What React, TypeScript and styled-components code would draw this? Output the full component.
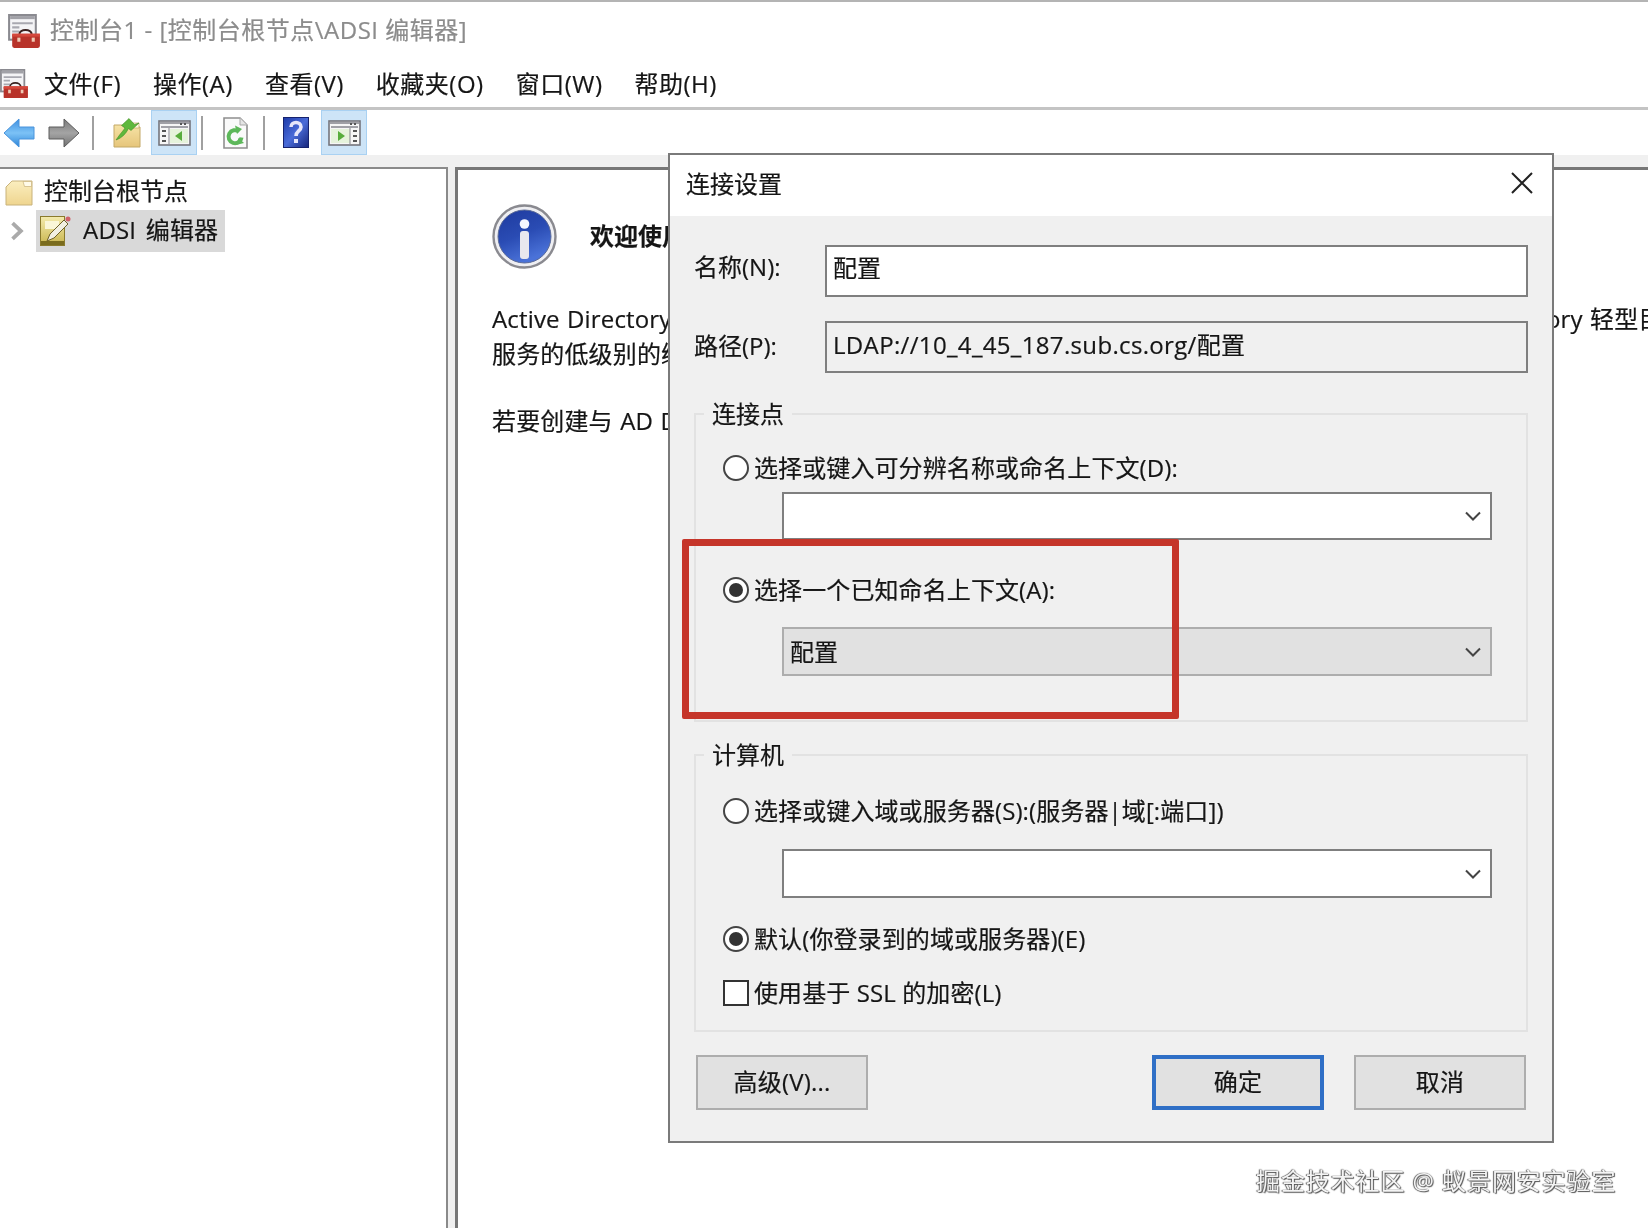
import React from 'react';
import styled, { createGlobalStyle } from 'styled-components';

const GlobalStyle = createGlobalStyle`
  html, body {
    margin: 0;
    padding: 0;
    background: #fff;
  }
  * { box-sizing: border-box; }
`;

const Page = styled.div`
  position: relative;
  width: 1648px;
  height: 1228px;
  overflow: hidden;
  display: flex;
  flex-direction: column;
  background: #fff;
  color: #151515;
  font-family: "Open Sans", "Noto Sans CJK SC", sans-serif;
  font-size: 24px;
  -webkit-text-stroke: 0.2px currentColor;
  filter: blur(0.45px);
`;

const TitleBar = styled.div`
  height: 60px;
  flex: none;
  display: flex;
  align-items: center;
  gap: 10px;
  padding: 0 0 0 8px;
  border-top: 2px solid #b4b4b4;
  color: #8c8c8c;
`;

const TitleText = styled.span`
  margin-bottom: 5px;
  letter-spacing: 0.5px;
`;

const MenuBar = styled.div`
  height: 50px;
  flex: none;
  display: flex;
  align-items: center;
  border-bottom: 3px solid #c4c4c4;
`;

const MenuLogo = styled.div`
  width: 44px;
  flex: none;
  display: flex;
`;

const MenuItem = styled.span`
  margin: 0 32px 2px 0;
  letter-spacing: 0.5px;
  white-space: nowrap;
`;

const ToolBar = styled.div`
  height: 45px;
  flex: none;
  display: flex;
  align-items: center;
`;

const ToolButton = styled.div<{ $w: number; $active?: boolean; $ml?: number }>`
  width: ${p => p.$w}px;
  height: 45px;
  margin-left: ${p => p.$ml ?? 0}px;
  flex: none;
  display: flex;
  align-items: center;
  justify-content: center;
  background: ${p => (p.$active ? '#cde4f7' : 'transparent')};
  border: ${p => (p.$active ? '1px solid #a9d1f2' : 'none')};
`;

const ToolSep = styled.div<{ $ml: number }>`
  width: 2px;
  height: 34px;
  margin-left: ${p => p.$ml}px;
  flex: none;
  background: #a0a0a0;
`;

const Workspace = styled.div`
  flex: 1;
  display: flex;
  gap: 7px;
  padding-top: 12px;
  background: #f0f0f0;
`;

const TreePane = styled.div`
  width: 448px;
  flex: none;
  background: #fff;
  border-top: 2px solid #8a8a8a;
  border-right: 2px solid #8a8a8a;
  padding-top: 6px;
`;

const TreeRow = styled.div<{ $pl: number; $mt?: number }>`
  display: flex;
  align-items: center;
  height: 35px;
  margin-top: ${p => p.$mt ?? 0}px;
  padding-left: ${p => p.$pl}px;
`;

const TreeIcon = styled.div`
  width: 39px;
  flex: none;
  display: flex;
`;

const TreeText = styled.span`
  margin-bottom: 6px;
`;

const TreeSelected = styled.div`
  display: flex;
  align-items: center;
  height: 42px;
  padding: 0 7px 0 4px;
  margin-left: 9px;
  background: #d9d9d9;
`;

const TreeSelectedIcon = styled.div`
  width: 43px;
  flex: none;
  display: flex;
`;

const TreeSelectedText = styled.span`
  margin-bottom: 4px;
  letter-spacing: 0.2px;
  word-spacing: 3px;
`;

const ContentPane = styled.div`
  flex: 1;
  min-width: 0;
  background: #fff;
  border-top: 3px solid #777;
  border-left: 3px solid #777;
  padding: 34px 0 0 34px;
  overflow: hidden;
`;

const WelcomeRow = styled.div`
  display: flex;
  align-items: center;
  gap: 33px;
`;

const WelcomeTitle = styled.span`
  margin-bottom: 4px;
  font-weight: 700;
  white-space: nowrap;
`;

const Para = styled.p`
  margin: 32px 0 1px;
  line-height: 35px;
  letter-spacing: 0.15px;
  word-spacing: 1px;
  white-space: nowrap;
`;

const Dialog = styled.div`
  position: absolute;
  left: 668px;
  top: 153px;
  width: 886px;
  height: 990px;
  display: flex;
  flex-direction: column;
  background: #f0f0f0;
  border: 2px solid #7a7a7a;
`;

const DialogHead = styled.div`
  height: 61px;
  flex: none;
  display: flex;
  align-items: center;
  justify-content: space-between;
  padding: 0 19px 6px 16px;
  background: #fff;
`;

const DialogBody = styled.div`
  flex: 1;
  position: relative;
  padding: 29px 24px 0;
`;

const FieldRow = styled.div<{ $mt?: number }>`
  display: grid;
  grid-template-columns: 131px 1fr;
  align-items: center;
  margin-top: ${p => p.$mt ?? 0}px;
`;

const FieldLabel = styled.span<{ $lift: number }>`
  margin-bottom: ${p => p.$lift}px;
  white-space: nowrap;
`;

const TextField = styled.div<{ $readOnly?: boolean }>`
  height: 52px;
  display: flex;
  align-items: center;
  padding: 0 0 ${p => (p.$readOnly ? 8 : 9)}px 6px;
  letter-spacing: ${p => (p.$readOnly ? 0.34 : 0)}px;
  white-space: nowrap;
  background: ${p => (p.$readOnly ? '#f0f0f0' : '#fff')};
  border: 2px solid #7f7f7f;
`;

const Group = styled.div<{ $mt: number; $h: number; $pt: number }>`
  position: relative;
  height: ${p => p.$h}px;
  margin-top: ${p => p.$mt}px;
  padding: ${p => p.$pt}px 34px 0 27px;
  border: 2px solid #e2e2e2;
`;

const Legend = styled.span`
  position: absolute;
  left: 8px;
  top: -17px;
  padding: 0 8px;
  line-height: 32px;
  background: #f0f0f0;
`;

const OptionRow = styled.div<{ $mt?: number }>`
  display: flex;
  align-items: center;
  gap: 5px;
  height: 30px;
  margin-top: ${p => p.$mt ?? 0}px;
  white-space: nowrap;
`;

const OptionText = styled.span`
  margin-bottom: 4px;
  letter-spacing: 0.1px;
`;

const Radio = styled.span<{ $checked?: boolean }>`
  width: 26px;
  height: 26px;
  flex: none;
  display: flex;
  align-items: center;
  justify-content: center;
  border-radius: 50%;
  background: #fff;
  border: 2px solid #444;

  &::after {
    content: '';
    display: ${p => (p.$checked ? 'block' : 'none')};
    width: 14px;
    height: 14px;
    border-radius: 50%;
    background: #333;
  }
`;

const CheckBox = styled.span`
  width: 26px;
  height: 26px;
  flex: none;
  background: #fff;
  border: 2px solid #333;
`;

const Combo = styled.div<{ $h: number; $mt: number; $filled?: boolean }>`
  height: ${p => p.$h}px;
  margin: ${p => p.$mt}px 0 0 59px;
  display: flex;
  align-items: center;
  justify-content: space-between;
  padding: 0 8px 0 6px;
  background: ${p => (p.$filled ? '#e1e1e1' : '#fff')};
  border: 2px solid ${p => (p.$filled ? '#adadad' : '#7f7f7f')};
`;

const ComboText = styled.span`
  margin-bottom: 3px;
`;

const ButtonRow = styled.div`
  display: flex;
  margin-top: 23px;
  padding-left: 2px;
`;

const DlgButton = styled.div<{ $primary?: boolean; $ml?: number }>`
  width: 172px;
  height: 55px;
  margin-left: ${p => p.$ml ?? 0}px;
  display: flex;
  align-items: center;
  justify-content: center;
  padding-bottom: 4px;
  letter-spacing: 0.2px;
  background: #e1e1e1;
  border: ${p => (p.$primary ? '4px solid #2f6fc6' : '2px solid #adadad')};
`;

const RedBox = styled.div`
  position: absolute;
  left: 12px;
  top: 323px;
  width: 497px;
  height: 180px;
  border: 7px solid #c5352a;
  border-radius: 2px;
`;

const Watermark = styled.div`
  position: absolute;
  left: 1256px;
  top: 1163px;
  line-height: 36px;
  letter-spacing: 0.9px;
  white-space: nowrap;
  color: #f4f4f4;
  -webkit-text-stroke: 0;
  text-shadow: 0 0 1px #444, 1px 1px 1px #555, -1px 0 1px #666;
`;

const MmcIcon: React.FC<{ size: number }> = ({ size }) => (
  <svg width={size} height={size * 1.06} viewBox="0 0 31 33">
    <rect x="1" y="1" width="26" height="24" fill="#f4f4f6" stroke="#8a8a90" strokeWidth="2" />
    <rect x="2" y="2" width="24" height="3" fill="#a2a2a8" />
    <path d="M4 9h20M4 13h7M4 17h7" stroke="#a8a8b0" strokeWidth="2" />
    <path d="M11 20c0-6 12-6 12 0" fill="none" stroke="#3a2220" strokeWidth="2" />
    <path d="M4 20h27v11a2 2 0 0 1-2 2H6a2 2 0 0 1-2-2z" fill="#b8332a" />
    <rect x="4" y="19" width="27" height="3" fill="#d4473c" />
    <rect x="9" y="23" width="3" height="4" fill="#efc9b4" />
    <rect x="23" y="23" width="3" height="4" fill="#efc9b4" />
  </svg>
);

const ArrowIcon: React.FC<{ dir: 'left' | 'right' }> = ({ dir }) => (
  <svg width="32" height="30" viewBox="0 0 32 30">
    <defs>
      <linearGradient id="backFill" x1="0" y1="0" x2="0" y2="1">
        <stop offset="0" stopColor="#3d8fe0" />
        <stop offset="0.5" stopColor="#7cc2f6" />
        <stop offset="1" stopColor="#2c84d8" />
      </linearGradient>
      <linearGradient id="nextFill" x1="0" y1="0" x2="0" y2="1">
        <stop offset="0" stopColor="#7a7a7a" />
        <stop offset="0.5" stopColor="#a4a4a4" />
        <stop offset="1" stopColor="#707070" />
      </linearGradient>
    </defs>
    <path
      d={dir === 'left' ? 'M1 15 16 1v8h15v12H16v8z' : 'M31 15 16 1v8H1v12h15v8z'}
      fill={dir === 'left' ? 'url(#backFill)' : 'url(#nextFill)'}
      stroke={dir === 'left' ? '#4a94dc' : '#5c5c5c'}
      strokeWidth="1"
    />
  </svg>
);

const FolderUpIcon = () => (
  <svg width="28" height="30" viewBox="0 0 28 30">
    <defs>
      <linearGradient id="upFolderFill" x1="0" y1="0" x2="0" y2="1">
        <stop offset="0" stopColor="#f6e3a6" />
        <stop offset="1" stopColor="#e6c57a" />
      </linearGradient>
    </defs>
    <path d="M1 7h8l2 2h16v20H1z" fill="url(#upFolderFill)" stroke="#c3a866" />
    <path d="M18 5h8v5h-8z" fill="#fff6dc" stroke="#c3a866" strokeWidth="0.7" />
    <path
      d="M3 22C7 16 10 13 12 10L8.5 7.5 16 0.5l5.5 6L26 5l-8 7.500-2.500-2C13 15.500 9 20 3 22z"
      fill="#5fb83c"
      stroke="#3f8f25"
      strokeWidth="0.6"
    />
  </svg>
);

const PaneIcon: React.FC<{ flip?: boolean }> = ({ flip }) => (
  <svg width="33" height="26" viewBox="0 0 33 26">
    <rect x="1" y="1" width="31" height="24" fill="#f6f6f6" stroke="#75757c" strokeWidth="1.6" />
    <rect x="2" y="2" width="29" height="2" fill="#a0a0a6" />
    <path d="M3 7h27" stroke="#85858c" strokeWidth="1.5" />
    <rect x="26" y="3" width="2" height="2" fill="#555" />
    <rect x="22" y="3" width="2" height="2" fill="#555" />
    {flip ? (
      <>
        <rect x="3" y="9" width="19" height="14" fill="#e6f3dc" />
        <path d="M22 8v16" stroke="#85858c" />
        <path d="M10 11l7 5-7 5z" fill="#58ad3c" />
        <path d="M25 11h4M25 16h4M25 21h4" stroke="#555" strokeWidth="2.2" />
      </>
    ) : (
      <>
        <path d="M4 11h4M4 16h4M4 21h4" stroke="#555" strokeWidth="2.2" />
        <path d="M11 8v16" stroke="#85858c" />
        <rect x="12" y="9" width="18" height="14" fill="#e6f3dc" />
        <path d="M24 11l-7 5 7 5z" fill="#58ad3c" />
      </>
    )}
  </svg>
);

const RefreshIcon = () => (
  <svg width="25" height="32" viewBox="0 0 25 32">
    <path d="M1 1h16l7 7v23H1z" fill="#fafafa" stroke="#8f8f8f" strokeWidth="1.6" />
    <path d="M17 1v7h7" fill="#e4e4e4" stroke="#a8a8a8" />
    <path d="M18.500 20.500a6.500 6.500 0 1 1-2.500-6" fill="none" stroke="#5db85a" strokeWidth="4" />
    <path d="M12 8.500l7 3.500-5 5z" fill="#5db85a" />
    <path d="M13 28l2.500-7 5.500 5z" fill="#5db85a" />
  </svg>
);

const HelpIcon = () => (
  <svg width="26" height="31" viewBox="0 0 26 31">
    <defs>
      <linearGradient id="helpFill" x1="0" y1="0" x2="1" y2="1">
        <stop offset="0" stopColor="#1d3aa8" />
        <stop offset="0.5" stopColor="#4a6bd8" />
        <stop offset="1" stopColor="#16257a" />
      </linearGradient>
    </defs>
    <rect x="0.500" y="0.500" width="25" height="30" fill="url(#helpFill)" stroke="#16226e" />
    <path d="M8 10c0-6 10-6 10 0 0 4-5 4-5 9" fill="none" stroke="#e6e6fa" strokeWidth="3.600" />
    <rect x="11" y="22" width="4" height="4" fill="#e6e6fa" />
  </svg>
);

const FolderIcon = () => (
  <svg width="28" height="26" viewBox="0 0 28 26">
    <defs>
      <linearGradient id="treeFolderFill" x1="0" y1="0" x2="0" y2="1">
        <stop offset="0" stopColor="#fbeebf" />
        <stop offset="1" stopColor="#efd58f" />
      </linearGradient>
    </defs>
    <path d="M1 7l6-6h20v24H1z" fill="url(#treeFolderFill)" stroke="#c8b27a" />
    <path d="M18 1.500h8.500v5h-7z" fill="#fffbe9" stroke="#c8b27a" strokeWidth="0.7" />
  </svg>
);

const AdsiIcon = () => (
  <svg width="32" height="31" viewBox="0 0 32 31">
    <defs>
      <linearGradient id="adsiFill" x1="0" y1="0" x2="0" y2="1">
        <stop offset="0" stopColor="#f4ebae" />
        <stop offset="1" stopColor="#c8b44c" />
      </linearGradient>
    </defs>
    <rect x="0.500" y="1.500" width="24" height="29" fill="url(#adsiFill)" stroke="#8a7a2c" />
    <rect x="1" y="26" width="23" height="4" fill="#7a6c1e" />
    <rect x="5" y="6" width="14" height="8" fill="#faf6d8" />
    <path d="M7 26l3-7L24 5l4 4-14 14z" fill="#f2efe2" stroke="#6e6028" />
    <circle cx="28" cy="4" r="2.500" fill="#d0626a" />
  </svg>
);

const InfoIcon = () => (
  <svg width="65" height="65" viewBox="0 0 65 65">
    <defs>
      <linearGradient id="infoFill" x1="0" y1="0" x2="0.4" y2="1">
        <stop offset="0" stopColor="#1e3a9e" />
        <stop offset="0.55" stopColor="#2a4cb4" />
        <stop offset="1" stopColor="#4a72d8" />
      </linearGradient>
    </defs>
    <circle cx="32.500" cy="32.500" r="31" fill="#efeff2" stroke="#8a8a90" strokeWidth="2.400" />
    <circle cx="32.500" cy="32.500" r="26.500" fill="url(#infoFill)" stroke="#5a6a98" />
    <circle cx="32.500" cy="20" r="4.800" fill="#f5f7ff" />
    <rect x="28" y="27" width="9" height="28" rx="3" fill="#e8e8ee" />
  </svg>
);

const Chevron: React.FC<{ size?: number; vertical?: boolean }> = ({ size = 18, vertical = true }) => (
  <svg width={size} height={size} viewBox="0 0 18 18">
    <path
      d={vertical ? 'M2 5.500 9 12.500 16 5.500' : 'M5 2 12.500 9 5 16'}
      fill="none"
      stroke={vertical ? '#444' : '#aaa'}
      strokeWidth={vertical ? 2 : 3.400}
    />
  </svg>
);

const CloseIcon = () => (
  <svg width="22" height="22" viewBox="0 0 22 22">
    <path d="M1 1l20 20M21 1 1 21" stroke="#222" strokeWidth="2" />
  </svg>
);

const menus = ['文件(F)', '操作(A)', '查看(V)', '收藏夹(O)', '窗口(W)', '帮助(H)'];

const App: React.FC = () => {
  return (
    <Page>
      <GlobalStyle />
      <TitleBar>
        <MmcIcon size={32} />
        <TitleText>控制台1 - [控制台根节点\ADSI 编辑器]</TitleText>
      </TitleBar>
      <MenuBar>
        <MenuLogo>
          <MmcIcon size={28} />
        </MenuLogo>
        {menus.map(m => (
          <MenuItem key={m}>{m}</MenuItem>
        ))}
      </MenuBar>
      <ToolBar>
        <ToolButton $w={32} $ml={3}>
          <ArrowIcon dir="left" />
        </ToolButton>
        <ToolButton $w={32} $ml={13}>
          <ArrowIcon dir="right" />
        </ToolButton>
        <ToolSep $ml={12} />
        <ToolButton $w={28} $ml={19}>
          <FolderUpIcon />
        </ToolButton>
        <ToolButton $w={46} $ml={10} $active>
          <PaneIcon />
        </ToolButton>
        <ToolSep $ml={4} />
        <ToolButton $w={25} $ml={20}>
          <RefreshIcon />
        </ToolButton>
        <ToolSep $ml={15} />
        <ToolButton $w={26} $ml={18}>
          <HelpIcon />
        </ToolButton>
        <ToolButton $w={46} $ml={12} $active>
          <PaneIcon flip />
        </ToolButton>
      </ToolBar>
      <Workspace>
        <TreePane>
          <TreeRow $pl={5}>
            <TreeIcon>
              <FolderIcon />
            </TreeIcon>
            <TreeText>控制台根节点</TreeText>
          </TreeRow>
          <TreeRow $pl={7} $mt={3}>
            <Chevron size={20} vertical={false} />
            <TreeSelected>
              <TreeSelectedIcon>
                <AdsiIcon />
              </TreeSelectedIcon>
              <TreeSelectedText>ADSI 编辑器</TreeSelectedText>
            </TreeSelected>
          </TreeRow>
        </TreePane>
        <ContentPane>
          <WelcomeRow>
            <InfoIcon />
            <WelcomeTitle>欢迎使用 ADSI 编辑器</WelcomeTitle>
          </WelcomeRow>
          <Para>
            Active Directory 服务接口编辑器(ADSI 编辑器)是 Active Directory 域服务(AD DS)和 Active Directory 轻型目录
            <br />
            服务的低级别的编辑器
          </Para>
          <Para>若要创建与 AD DS 或 AD LDS 的连接</Para>
        </ContentPane>
      </Workspace>

      <Dialog>
        <DialogHead>
          <span>连接设置</span>
          <CloseIcon />
        </DialogHead>
        <DialogBody>
          <FieldRow>
            <FieldLabel $lift={11}>名称(N):</FieldLabel>
            <TextField>配置</TextField>
          </FieldRow>
          <FieldRow $mt={24}>
            <FieldLabel $lift={5}>路径(P):</FieldLabel>
            <TextField $readOnly>LDAP://10_4_45_187.sub.cs.org/配置</TextField>
          </FieldRow>
          <Group $mt={40} $h={309} $pt={38}>
            <Legend>连接点</Legend>
            <OptionRow>
              <Radio />
              <OptionText>选择或键入可分辨名称或命名上下文(D):</OptionText>
            </OptionRow>
            <Combo $h={48} $mt={9}>
              <span />
              <Chevron />
            </Combo>
            <OptionRow $mt={35}>
              <Radio $checked />
              <OptionText>选择一个已知命名上下文(A):</OptionText>
            </OptionRow>
            <Combo $h={49} $mt={22} $filled>
              <ComboText>配置</ComboText>
              <Chevron />
            </Combo>
          </Group>
          <Group $mt={32} $h={278} $pt={40}>
            <Legend>计算机</Legend>
            <OptionRow>
              <Radio />
              <OptionText>选择或键入域或服务器(S):(服务器|域[:端口])</OptionText>
            </OptionRow>
            <Combo $h={49} $mt={23}>
              <span />
              <Chevron />
            </Combo>
            <OptionRow $mt={26}>
              <Radio $checked />
              <OptionText>默认(你登录到的域或服务器)(E)</OptionText>
            </OptionRow>
            <OptionRow $mt={24}>
              <CheckBox />
              <OptionText>使用基于 SSL 的加密(L)</OptionText>
            </OptionRow>
          </Group>
          <ButtonRow>
            <DlgButton>高级(V)...</DlgButton>
            <DlgButton $primary $ml={284}>确定</DlgButton>
            <DlgButton $ml={30}>取消</DlgButton>
          </ButtonRow>
          <RedBox />
        </DialogBody>
      </Dialog>

      <Watermark>掘金技术社区 @ 蚁景网安实验室</Watermark>
    </Page>
  );
};

export default App;
